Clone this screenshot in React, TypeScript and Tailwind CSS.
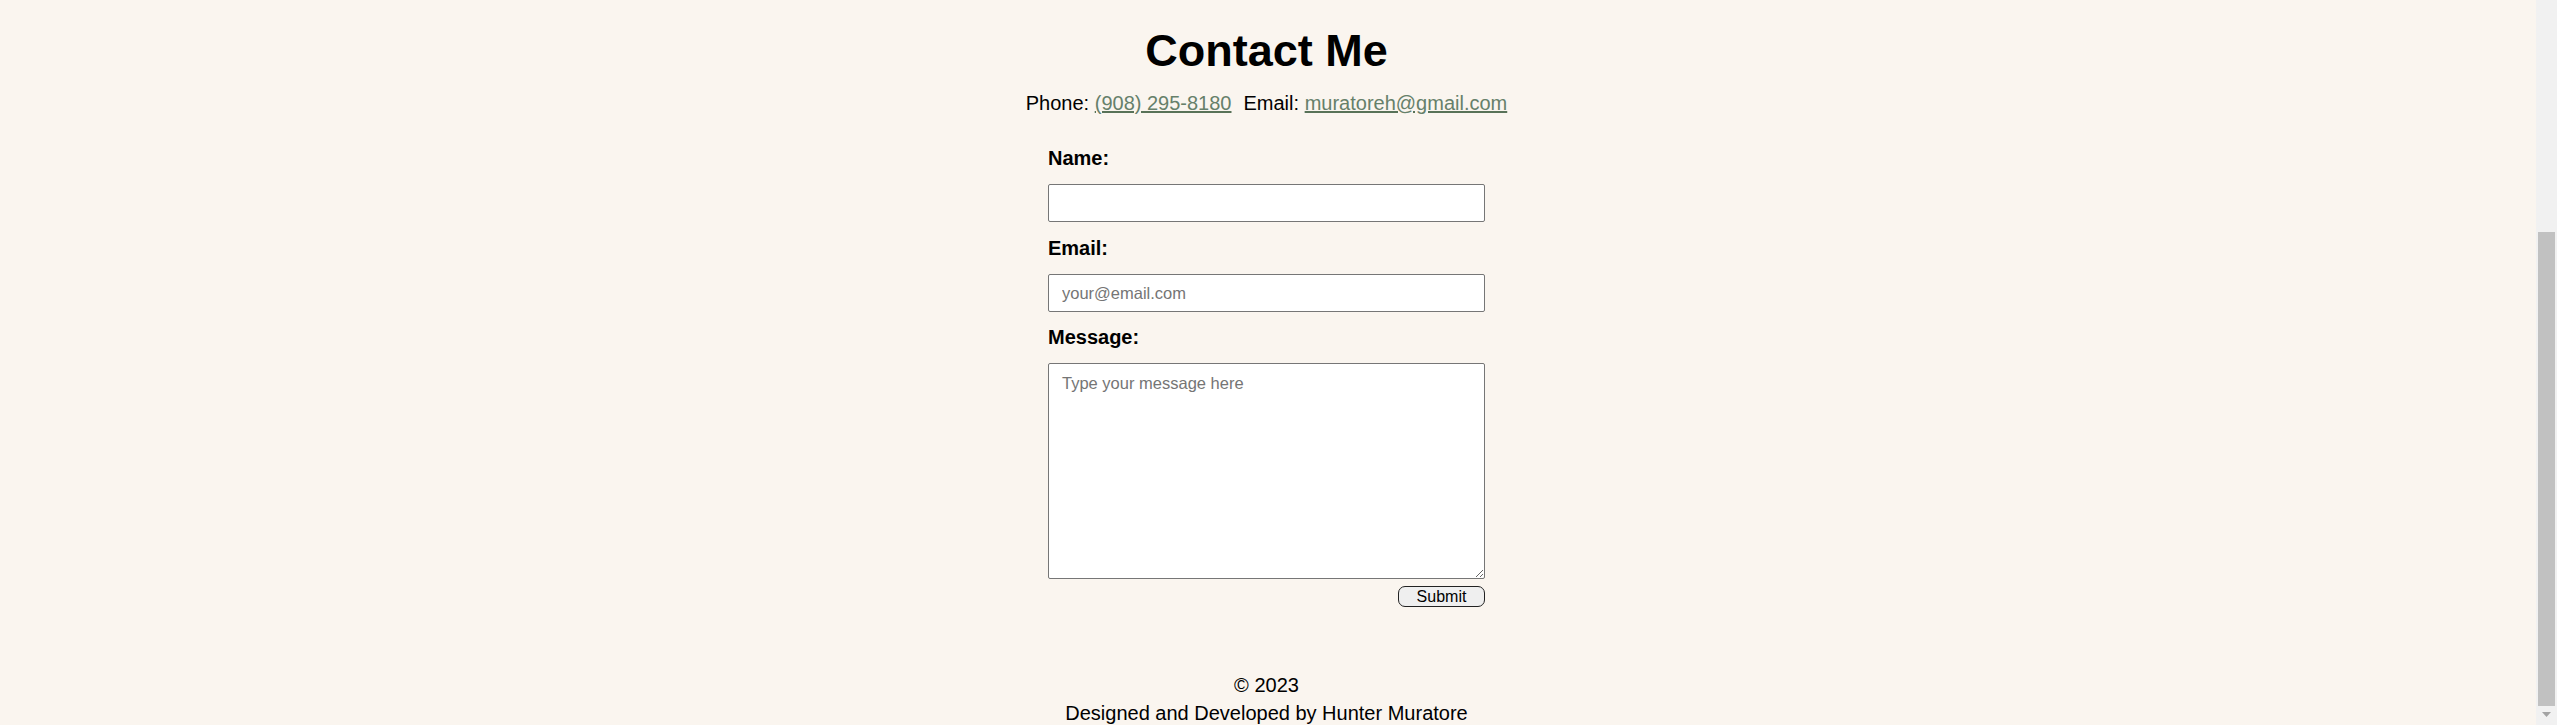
const Contact = () => {
  return (
    <main className="flex flex-1 flex-col items-center pt-[26px] pr-[3px]">
      <h1 className="text-[45px] leading-[50px] font-bold text-black">Contact Me</h1>
      <p className="mt-[16px] flex gap-[12px] text-[20px] leading-[23px] text-black">
        <span>
          Phone:{" "}
          <a href="tel:9082958180" className="text-[#66806a] underline decoration-[#587258]">
            (908) 295-8180
          </a>
        </span>
        <span>
          Email:{" "}
          <a href="mailto:muratoreh@gmail.com" className="text-[#66806a] underline decoration-[#587258]">
            muratoreh@gmail.com
          </a>
        </span>
      </p>
      <form className="mt-[32px] flex w-[437px] flex-col">
        <label htmlFor="name" className="mb-[14px] text-[20px] leading-[23px] font-bold">
          Name:
        </label>
        <input
          id="name"
          type="text"
          className="mb-[15px] h-[38px] rounded-[2px] border border-[#767676] bg-white px-[13px] text-[16.5px] outline-none"
        />
        <label htmlFor="email" className="mb-[14px] text-[20px] leading-[23px] font-bold">
          Email:
        </label>
        <input
          id="email"
          type="email"
          placeholder="your@email.com"
          className="mb-[14px] h-[38px] rounded-[2px] border border-[#767676] bg-white px-[13px] text-[16.5px] outline-none placeholder:text-[#757575]"
        />
        <label htmlFor="message" className="mb-[14px] text-[20px] leading-[23px] font-bold">
          Message:
        </label>
        <textarea
          id="message"
          placeholder="Type your message here"
          className="h-[216px] resize rounded-[2px] border border-[#767676] bg-white px-[13px] py-[7px] text-[16.5px] outline-none placeholder:text-[#757575]"
        />
        <div className="mt-[7px] flex justify-end">
          <button
            type="button"
            className="h-[21px] w-[87px] rounded-[7px] border border-[#222] bg-[#efefef] text-[16px] leading-[19px] text-black"
          >
            Submit
          </button>
        </div>
      </form>
      <footer className="mt-[67px] flex flex-col items-center gap-[5px] text-[20px] leading-[23px] text-black">
        <p>© 2023</p>
        <p>Designed and Developed by Hunter Muratore</p>
      </footer>
    </main>
  );
};

// the screenshot was taken scrolled down, so the window scrollbar shows
const FakeScrollbar = () => (
  <div className="flex w-[21px] flex-col items-center bg-[#f1f1f1] pt-[232px]">
    <div className="h-[474px] w-[17px] bg-[#c1c1c1]" />
    <svg width="9" height="6" viewBox="0 0 9 6" className="mt-[6px]">
      <polygon points="0,0 9,0 4.5,5" fill="#a3a3a3" />
    </svg>
  </div>
);

export default function App() {
  return (
    <div className="flex h-[725px] overflow-hidden bg-[#faf5ef] font-['Liberation_Sans',Arial,sans-serif] text-black">
      <Contact />
      <FakeScrollbar />
    </div>
  );
}
